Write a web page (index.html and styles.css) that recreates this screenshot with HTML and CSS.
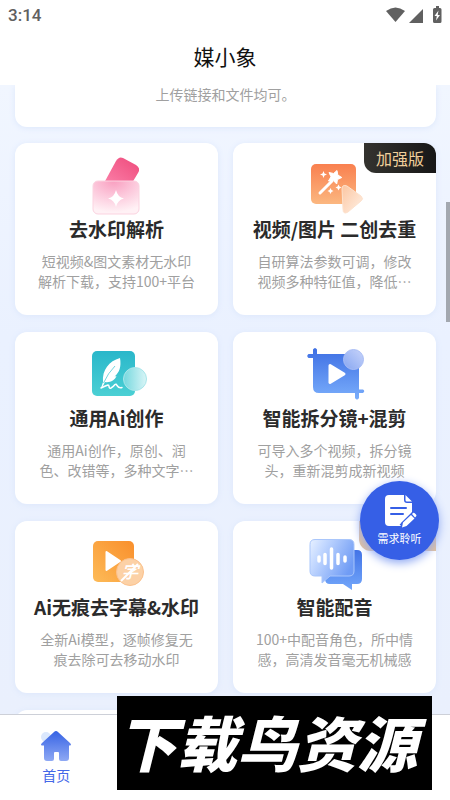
FILE: index.html
```html
<!DOCTYPE html>
<html lang="zh-CN">
    <head>
        <meta charset="utf-8">
        <meta name="viewport" content="width=device-width, initial-scale=1">
        <title>媒小象</title>
        <link rel="stylesheet" href="styles.css">
    </head>
    <body>
        <div class="status">
            <span class="clock">3:14</span>
            <svg width="56" height="18" viewBox="0 0 56 18" fill="#606060">
                <path d="M0 5Q9.500-2 19 5L9.500 16Z"/>
                <path d="M23 17L37 3V17Z"/>
                <path d="M47 3.500q0-1.500 1.500-1.500H50V0h3v2h1q1.500 0 1.500 1.500v12q0 1.500-1.500 1.500h-5.500q-1.500 0-1.500-1.500z"/>
                <path fill="#fff" d="M52.500 4.500L48.500 10h2.300l-.8 4.500 4-5.500h-2.300z"/>
            </svg>
        </div>
        <header class="header"><h1>媒小象</h1></header>

        <main class="content">
            <div class="intro">上传链接和文件均可。</div>
            <div class="grid">
                <section class="card">
                    <svg class="icon" viewBox="0 0 64 60">
                        <defs>
                            <linearGradient id="pink" x1="1" y1="0" x2="0" y2="1"><stop offset="0" stop-color="#ee4a7b"/><stop offset="1" stop-color="#fb7fa8"/></linearGradient>
                            <radialGradient id="pinkGlass" cx=".45" cy="0" r=".95"><stop offset="0" stop-color="#f99fc0"/><stop offset=".5" stop-color="#fcc9dc"/><stop offset="1" stop-color="#fff1f5"/></radialGradient>
                        </defs>
                        <path fill="url(#pink)" d="M19 28L31 6Q34 1 38 3L51 10Q56 13 53 18L47 28Z"/>
                        <rect x="8" y="26" width="46" height="33" rx="5" fill="url(#pinkGlass)" stroke="#fbd3e0"/>
                        <path fill="#fff" d="M31 35q1.500 7 8 8.500-6.500 1.500-8 8.500-1.500-7-8-8.500 6.500-1.500 8-8.500z"/>
                    </svg>
                    <h2>去水印解析</h2>
                    <p>短视频&amp;图文素材无水印<br>解析下载，支持100+平台</p>
                </section>

                <section class="card">
                    <span class="badge">加强版</span>
                    <svg class="icon" viewBox="0 0 64 60">
                        <defs>
                            <linearGradient id="orange" x1="0" y1="0" x2="0" y2="1"><stop offset="0" stop-color="#f9804f"/><stop offset="1" stop-color="#fbb780"/></linearGradient>
                            <linearGradient id="peach" x1="0" y1="0" x2="1" y2="1"><stop offset="0" stop-color="#fbc6a2"/><stop offset="1" stop-color="#fff0e4"/></linearGradient>
                        </defs>
                        <rect x="8" y="9" width="45" height="40" rx="5" fill="url(#orange)"/>
                        <path stroke="#fff" stroke-width="3" stroke-linecap="round" d="M17 38L29 26"/>
                        <path fill="#fff" stroke="#fff" stroke-linejoin="round" d="M34 15.500l.8 4.500 4 2.500-4.300 2-.8 4.500-3.400-3.500-4.800.5 2.500-4.200-2-4.300 4.600 1z"/>
                        <path fill="#fff" d="M20.500 16l1 2.500 2.500 1-2.500 1-1 2.500-1-2.500-2.500-1 2.500-1zM35.500 29.500l1 2 2 1-2 1-1 2-1-2-2-1 2-1zM27.500 33l1 2 2 1-2 1-1 2-1-2-2-1 2-1z"/>
                        <path fill="url(#peach)" stroke="#fde2cd" stroke-linejoin="round" d="M39 34q0-5 5-3L58 41q3 3 0 5L45 57q-5 3-5-3z"/>
                    </svg>
                    <h2>视频/图片 二创去重</h2>
                    <p>自研算法参数可调，修改<br>视频多种特征值，降低⋯</p>
                </section>

                <section class="card">
                    <svg class="icon" viewBox="0 0 64 60">
                        <defs>
                            <linearGradient id="teal" x1="0" y1="0" x2="0" y2="1"><stop offset="0" stop-color="#2ab7ca"/><stop offset="1" stop-color="#4bd0d4"/></linearGradient>
                            <linearGradient id="tealGlass"><stop offset="0" stop-color="#76d8de"/><stop offset="1" stop-color="#d9f5f7"/></linearGradient>
                        </defs>
                        <rect x="7" y="7" width="43" height="45" rx="5" fill="url(#teal)"/>
                        <path fill="#fff" d="M35 14C24 17 17 26 18 38l-2 6 1.500-1 2.500-5c5 1 10-2 11.500-6l-2 .5c5-4 7-10 5.500-18.500z"/>
                        <path fill="none" stroke="#39c1cf" stroke-width=".7" d="M30 22Q23 29 18.500 39"/>
                        <path fill="none" stroke="#fff" stroke-width="1.500" stroke-linecap="round" d="M16 44q4-2 7-3c2 0 0 4 3 3q2-1 4-3.500 1-1 2 1 2 3 5 2"/>
                        <circle cx="50" cy="35" r="11.500" fill="url(#tealGlass)" stroke="#a9e6ea"/>
                    </svg>
                    <h2>通用Ai创作</h2>
                    <p>通用Ai创作，原创、润<br>色、改错等，多种文字⋯</p>
                </section>

                <section class="card">
                    <svg class="icon" viewBox="0 0 64 60">
                        <defs>
                            <linearGradient id="blue" gradientUnits="userSpaceOnUse" x1="0" y1="5" x2="0" y2="55"><stop offset="0" stop-color="#3f70e4"/><stop offset="1" stop-color="#79adfb"/></linearGradient>
                            <linearGradient id="blueGlass" x1="1" y1="0" x2="0" y2="1"><stop offset="0" stop-color="#c8d4fa"/><stop offset="1" stop-color="#86a6f1"/></linearGradient>
                        </defs>
                        <path fill="url(#blue)" d="M10 5.500q2-3 4 0V10h42v35.500h4q2.500 1.500 0 3.500h-4v5q-2 3-4 0v-5H16q-6 0-6-6V14H5.500q-2.500-2 0-4H10z"/>
                        <path fill="#fff" stroke="#fff" stroke-width="3" stroke-linejoin="round" d="M27 21.500L41 30 27 38.500z"/>
                        <circle cx="50.500" cy="15.500" r="10" fill="url(#blueGlass)" stroke="#a9bdf5"/>
                    </svg>
                    <h2>智能拆分镜+混剪</h2>
                    <p>可导入多个视频，拆分镜<br>头，重新混剪成新视频</p>
                </section>

                <section class="card">
                    <svg class="icon" viewBox="0 0 64 60">
                        <defs>
                            <linearGradient id="amber" x1="1" y1="0" x2="0" y2="1"><stop offset="0" stop-color="#f98f2c"/><stop offset="1" stop-color="#fdbb58"/></linearGradient>
                        </defs>
                        <rect x="8" y="8" width="41" height="41" rx="5" fill="url(#amber)"/>
                        <path fill="#fff" stroke="#fff" stroke-width="2" stroke-linejoin="round" d="M21.500 19L35 28 21.500 37z"/>
                        <circle cx="45" cy="39" r="13.500" fill="#fcd1a6" stroke="#fbc18d"/>
                        <text class="glyph" x="45" y="45" text-anchor="middle">字</text>
                        <path stroke="#fff" stroke-width="2" d="M36 48L53 31"/>
                    </svg>
                    <h2>Ai无痕去字幕&amp;水印</h2>
                    <p>全新Ai模型，逐帧修复无<br>痕去除可去移动水印</p>
                </section>

                <section class="card">
                    <span class="badge badge-tan"></span>
                    <svg class="icon" viewBox="0 0 64 60">
                        <defs>
                            <linearGradient id="bubble" x1="0" y1="0" x2="0" y2="1"><stop offset="0" stop-color="#4273e6"/><stop offset="1" stop-color="#73a7fa"/></linearGradient>
                            <linearGradient id="bubbleGlass" x1="0" y1="0" x2="1" y2=".5"><stop offset="0" stop-color="#e8f1ff"/><stop offset=".3" stop-color="#c3d8ff"/><stop offset="1" stop-color="#709cf5"/></linearGradient>
                        </defs>
                        <path fill="url(#bubble)" d="M28 17h26q5 0 5 5v24q0 5-5 5h-5v6l-9-6H27q-5 0-5-5V22z"/>
                        <path fill="url(#bubbleGlass)" stroke="#a9c6fb" d="M12 6.500h34q5 0 5 5V38q0 5-5 5H27l-8 7v-7h-7q-5 0-5-5V11.500q0-5 5-5z"/>
                        <path stroke="#fff" stroke-width="3.500" stroke-linecap="round" d="M16 24v4M22 21.500v9M28.500 16v19M35 21.500v9M42 24v4"/>
                    </svg>
                    <h2>智能配音</h2>
                    <p>100+中配音角色，所中情<br>感，高清发音毫无机械感</p>
                </section>

                <section class="card"></section>
            </div>
            <div class="scrollbar"></div>
        </main>

        <nav class="tabbar">
            <a class="tab" href="#">
                <svg width="32" height="32" viewBox="0 0 32 32">
                    <defs>
                        <linearGradient id="home" x1="0" y1="0" x2="0" y2="1"><stop offset="0" stop-color="#3663e4"/><stop offset="1" stop-color="#8fa9f4"/></linearGradient>
                    </defs>
                    <circle cx="6" cy="7" r="5" fill="#dbe8fd"/>
                    <path fill="url(#home)" d="M14 2q2-2 4 0l12 11q2 2 0 2.500h-1V28q0 3-3 3h-5q-2 0-2-2v-6q0-1-1-1h-3q-1 0-1 1v6q0 2-2 2H7q-3 0-3-3V15.500H2q-2-.5 0-2.500z"/>
                </svg>
                首页
            </a>
        </nav>

        <button class="fab" type="button">
            <svg width="34" height="34" viewBox="0 0 34 34">
                <path fill="#fff" d="M6 1h15v5q0 3 3 3h5v9L18 29v3H6q-4 0-4-4V5q0-4 4-4zM22.500 1L29 7.500h-5q-1.500 0-1.500-1.500z"/>
                <path stroke="#365fe6" stroke-width="2" stroke-linecap="round" d="M8 14h15M8 20h12"/>
                <path stroke="#365fe6" stroke-width="7" d="M19 33L32 21"/>
                <path fill="#fff" d="M20 28.500L28 21l3.500 3.500L23.500 32l-4.500 1.500zM29 20l1-1q1-.5 2 .5l1 1q1 1 0 2l-1 1z"/>
            </svg>
            <span>需求聆听</span>
        </button>
        <div class="watermark">下载鸟资源</div>
    </body>
</html>
```

FILE: styles.css
```css
* {
    box-sizing: border-box;
}

html, body, h1, h2, p {
    margin: 0;
    padding: 0;
}

body {
    position: relative;
    display: flex;
    flex-direction: column;
    height: 100vh;
    overflow: hidden;
    background: #fff;
    color: #2b2b2b;
    font-family: "Noto Sans CJK SC", sans-serif;
}

.status {
    display: flex;
    flex: none;
    justify-content: space-between;
    align-items: center;
    height: 30px;
    padding: 0 8px;
}

.clock {
    color: #606060;
    font-family: Roboto, sans-serif;
    font-size: 17px;
    font-weight: 500;
}

.header {
    flex: none;
    height: 55px;
    text-align: center;
}

.header h1 {
    color: #111;
    font-size: 21px;
    font-weight: 400;
    line-height: 52px;
}

/* scrolling list */
.content {
    position: relative;
    flex: 1;
    min-height: 0;
    overflow: hidden;
    padding: 0 14px 0 15px;
    background: linear-gradient(#f1f6ff, #eaf1ff 40%, #eaf0fd);
}

.intro,
.card {
    background: #fff;
    box-shadow: 0 1px 6px #dce7fb;
    color: #a0a0a0;
    font-size: 14px;
    font-weight: 400;
    text-align: center;
}

.intro {
    margin-bottom: 16px;
    padding-bottom: 24px;
    border-radius: 0 0 12px 12px;
    line-height: 18px;
}

.grid {
    display: grid;
    grid-template-columns: 1fr 1fr;
    gap: 17px 15px;
}

.card {
    position: relative;
    min-height: 172px;
    padding: 12px 0 24px;
    border-radius: 12px;
}

.icon {
    display: block;
    width: 64px;
    height: 60px;
    margin: 0 auto;
}

.glyph {
    fill: #fff;
    font-size: 17px;
    font-style: italic;
    font-weight: 500;
}

.card h2 {
    margin-bottom: 8px;
    color: #2b2b2b;
    font-size: 19px;
    font-weight: 700;
    line-height: 28px;
    white-space: nowrap;
}

.card p {
    line-height: 20px;
    white-space: nowrap;
}

.badge {
    position: absolute;
    top: 0;
    right: 0;
    height: 30px;
    padding: 0 12px;
    border-radius: 0 12px 0 12px;
    background: linear-gradient(90deg, #34332f, #171717);
    color: #f0cf9b;
    font-size: 16px;
    font-weight: 400;
    line-height: 30px;
}

.badge-tan {
    width: 77px;
    background: #e3c19b;
}

.scrollbar {
    position: absolute;
    top: 117px;
    right: 0;
    width: 4px;
    height: 120px;
    background: #a3a8b0;
}

.tabbar {
    display: flex;
    flex: none;
    height: 86px;
    border-top: 1px solid #cdd0d8;
    background: #fff;
}

.tab {
    display: flex;
    flex-direction: column;
    align-items: center;
    width: 25%;
    padding-top: 15px;
    color: #4468e8;
    font-size: 14px;
    line-height: 26px;
    text-decoration: none;
}

.fab {
    position: absolute;
    right: 11px;
    bottom: 240px;
    display: flex;
    flex-direction: column;
    align-items: center;
    width: 79px;
    height: 79px;
    padding: 13px 0 0;
    border: 0;
    border-radius: 50%;
    background: #365fe6;
    box-shadow: 0 3px 10px #8ea8f3;
    color: #fff;
    font-family: inherit;
    font-size: 11px;
    line-height: 20px;
}

.watermark {
    position: absolute;
    right: 18px;
    bottom: 10px;
    width: 315px;
    height: 94px;
    background: #000;
    color: #fff;
    font-size: 60px;
    font-style: italic;
    font-weight: 900;
    line-height: 90px;
    white-space: nowrap;
}
```
